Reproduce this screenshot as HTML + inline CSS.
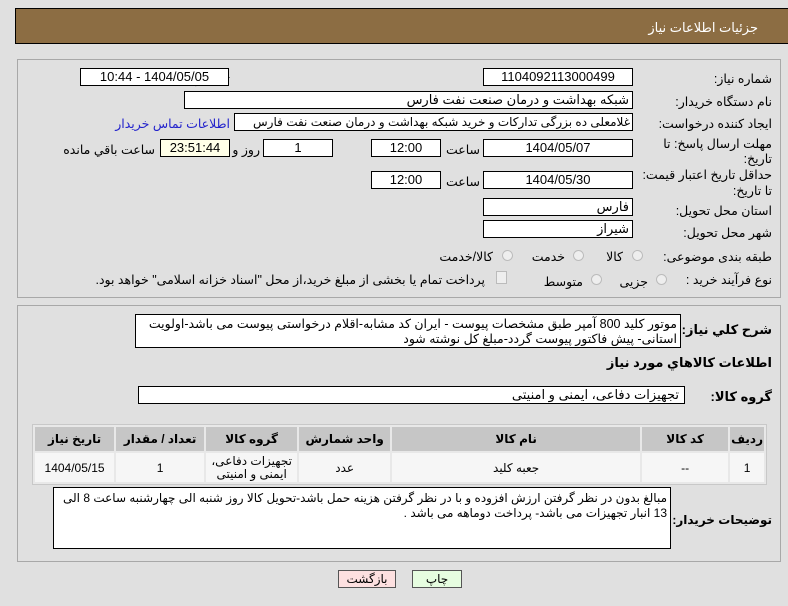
<!DOCTYPE html><html><head><meta charset="utf-8"><style>
body{margin:0;width:788px;height:606px;background:#e0e0e0;font-family:"Liberation Sans","DejaVu Sans",sans-serif;font-size:12px;color:#000;position:relative;overflow:hidden}
.a{position:absolute}
.in{position:absolute;background:#fff;border:1px solid #000;box-sizing:border-box;height:18px;line-height:16px;text-align:center;font-size:13px;direction:rtl;overflow:hidden;white-space:nowrap}
.l{position:absolute;direction:rtl;text-align:right;font-size:12.5px;white-space:nowrap}
.rad{position:absolute;width:11px;height:11px;border-radius:50%;border:1px solid #bbb;background:#eee;box-sizing:border-box}
table{border-collapse:separate;border-spacing:2px;position:absolute;left:32px;top:424px;width:735px;background:#e8e8e8;border:1px solid #c8c8c8;direction:rtl}
th{background:#c6c6c6;height:22px;font-size:12px;font-weight:bold}
td{background:#f6f6f6;height:27px;text-align:center;font-size:12px}
</style></head><body>
<div class="a" style="left:15px;top:8px;width:775px;height:36px;background:#8c6d43;border:1px solid #000;box-sizing:border-box"></div>
<div class="l" style="right:30px;top:20px;color:#fff;font-size:13px">جزئیات اطلاعات نیاز</div>
<div class="a" style="left:17px;top:59px;width:764px;height:239px;border:1px solid #a8a8a8;box-sizing:border-box"></div>
<div class="a" style="left:17px;top:305px;width:764px;height:257px;border:1px solid #a8a8a8;box-sizing:border-box"></div>

<div class="l" style="right:16px;top:71px">شماره نیاز:</div>
<div class="in" style="left:483px;top:68px;width:150px">1104092113000499</div>
<div class="l" style="right:558px;top:71px">تاریخ و ساعت اعلان عمومي:</div>
<div class="in" style="left:80px;top:68px;width:149px">1404/05/05 - 10:44</div>

<div class="l" style="right:16px;top:94px">نام دستگاه خریدار:</div>
<div class="in" style="left:184px;top:91px;width:449px;text-align:right;padding-right:3px">شبکه بهداشت و درمان صنعت نفت فارس</div>

<div class="l" style="right:16px;top:116px">ایجاد کننده درخواست:</div>
<div class="in" style="left:234px;top:113px;width:399px;text-align:right;padding-right:2px;font-size:12px;letter-spacing:-0.2px">غلامعلی ده بزرگی تدارکات و خرید شبکه بهداشت و درمان صنعت نفت فارس</div>
<div class="l" style="right:558px;top:116px;color:#2222cc">اطلاعات تماس خریدار</div>

<div class="l" style="right:16px;top:137px;line-height:15px;white-space:normal;width:125px">مهلت ارسال پاسخ: تا تاریخ:</div>
<div class="in" style="left:483px;top:139px;width:150px">1404/05/07</div>
<div class="l" style="right:308px;top:142px">ساعت</div>
<div class="in" style="left:371px;top:139px;width:70px">12:00</div>
<div class="in" style="left:263px;top:139px;width:70px">1</div>
<div class="l" style="right:528px;top:142px">روز و</div>
<div class="in" style="left:160px;top:139px;width:70px;background:#ffffe8">23:51:44</div>
<div class="l" style="right:633px;top:142px">ساعت باقي مانده</div>

<div class="l" style="right:16px;top:167px;line-height:16px;white-space:normal;width:135px">حداقل تاریخ اعتبار قیمت: تا تاریخ:</div>
<div class="in" style="left:483px;top:171px;width:150px">1404/05/30</div>
<div class="l" style="right:308px;top:174px">ساعت</div>
<div class="in" style="left:371px;top:171px;width:70px">12:00</div>

<div class="l" style="right:16px;top:203px">استان محل تحویل:</div>
<div class="in" style="left:483px;top:198px;width:150px;text-align:right;padding-right:3px">فارس</div>
<div class="l" style="right:16px;top:225px">شهر محل تحویل:</div>
<div class="in" style="left:483px;top:220px;width:150px;text-align:right;padding-right:3px">شیراز</div>

<div class="l" style="right:16px;top:249px">طبقه بندی موضوعی:</div>
<div class="rad" style="left:632px;top:250px"></div><div class="l" style="right:165px;top:249px">کالا</div>
<div class="rad" style="left:573px;top:250px"></div><div class="l" style="right:223px;top:249px">خدمت</div>
<div class="rad" style="left:502px;top:250px"></div><div class="l" style="right:295px;top:249px">کالا/خدمت</div>

<div class="l" style="right:16px;top:272px">نوع فرآیند خرید :</div>
<div class="rad" style="left:656px;top:274px"></div><div class="l" style="right:140px;top:274px">جزیی</div>
<div class="rad" style="left:591px;top:274px"></div><div class="l" style="right:205px;top:274px">متوسط</div>
<div class="a" style="left:496px;top:271px;width:9px;height:11px;border:1px solid #bbb;background:#eee"></div>
<div class="l" style="right:303px;top:272px">پرداخت تمام یا بخشی از مبلغ خرید،از محل "اسناد خزانه اسلامی" خواهد بود.</div>

<div class="l" style="right:16px;top:322px;font-weight:bold;font-size:13px">شرح كلي نياز:</div>
<div class="a" style="left:135px;top:314px;width:546px;height:34px;background:#fff;border:1px solid #000;box-sizing:border-box;direction:rtl;text-align:right;padding:2px 3px;font-size:12.5px;line-height:15px">موتور کلید 800 آمپر طبق مشخصات پیوست - ایران کد مشابه-اقلام درخواستی پیوست می باشد-اولویت استانی- پیش فاکتور پیوست گردد-مبلغ کل نوشته شود</div>
<div class="l" style="right:16px;top:355px;font-weight:bold;font-size:13px">اطلاعات كالاهاي مورد نياز</div>
<div class="l" style="right:16px;top:389px;font-weight:bold;font-size:13px">گروه کالا:</div>
<div class="in" style="left:138px;top:386px;width:547px;text-align:right;padding-right:5px">تجهیزات دفاعی، ایمنی و امنیتی</div>

<table>
<tr><th style="width:25px">ردیف</th><th style="width:84px">کد کالا</th><th style="width:246px">نام کالا</th><th style="width:89px">واحد شمارش</th><th style="width:89px">گروه کالا</th><th style="width:86px">تعداد / مقدار</th><th>تاریخ نیاز</th></tr>
<tr><td>1</td><td>--</td><td>جعبه کلید</td><td>عدد</td><td style="line-height:13px">تجهیزات دفاعی، ایمنی و امنیتی</td><td>1</td><td>1404/05/15</td></tr>
</table>

<div class="l" style="right:16px;top:513px;font-weight:bold;font-size:12px">توضیحات خریدار:</div>
<div class="a" style="left:53px;top:487px;width:618px;height:62px;background:#fff;border:1px solid #000;box-sizing:border-box;direction:rtl;text-align:right;padding:3px 3px;font-size:12px;line-height:15px">مبالغ بدون در نظر گرفتن ارزش افزوده و با در نظر گرفتن هزینه حمل باشد-تحویل کالا روز شنبه الی چهارشنبه ساعت 8 الی 13 انبار تجهیزات می باشد- پرداخت دوماهه می باشد .</div>

<div class="a" style="left:338px;top:570px;width:58px;height:18px;background:#fde0e0;border:1px solid #555;box-sizing:border-box;text-align:center;line-height:16px">بازگشت</div>
<div class="a" style="left:412px;top:570px;width:50px;height:18px;background:#e6fde0;border:1px solid #555;box-sizing:border-box;text-align:center;line-height:16px">چاپ</div>
</body></html>
